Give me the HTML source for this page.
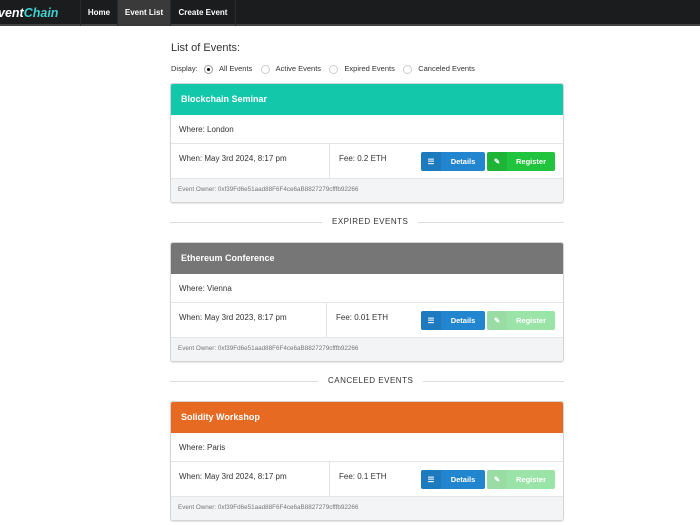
<!DOCTYPE html><html><head><style>
*{box-sizing:border-box;margin:0;padding:0}
body{width:700px;height:525px;overflow:hidden;background:#fff;font-family:"Liberation Sans",sans-serif;color:#333;position:relative}
.nav{position:absolute;left:0;top:0;width:700px;height:26px;background:#1b1c1d;border-bottom:2px solid #444}
.nav .b{position:absolute;left:-2px;top:6px;font-size:12.5px;font-weight:bold;font-style:italic;color:#fff}
.nav .b span{color:#3ed0d0}
.t{position:absolute;top:0;height:26px;line-height:26px;font-size:8px;font-weight:bold;color:#fff;text-align:center;border-left:1px solid #2a2a2a}
.a{position:absolute;font-size:8px;color:#333}
.card{position:absolute;left:170px;width:394px;height:120px;border:1px solid #d4d4d5;border-radius:3px;box-shadow:0 1px 1px #e5e5e5;overflow:hidden}
.h{height:31px;line-height:31px;padding-left:10px;color:#fff;font-size:9px;font-weight:bold}
.r1{height:29px;line-height:29px;padding-left:8px;font-size:8px;border-bottom:1px solid #e5e5e5}
.r2{height:35px;position:relative;border-bottom:1px solid #e5e5e5;font-size:8px}
.r3{height:24px;line-height:22px;background:#f3f4f5;padding-left:7px;font-size:6.3px;color:#777}
.btn{position:absolute;top:8px;height:19px;border-radius:2px;color:#fff;font-size:7.5px;font-weight:bold;line-height:19px}
.btn i{position:absolute;left:0;top:0;width:20px;height:19px;background:rgba(0,0,0,.08);font-style:normal;text-align:center}
.btn b{position:absolute;left:20px;right:0;text-align:center}
.div{position:absolute;left:170px;width:394px;height:1px;background:#ddd}
.dl{position:absolute;background:#fff;padding:0 10px;font-size:8px;letter-spacing:.5px;color:#333;top:-5px}
.rad{display:inline-block;width:9px;height:9px;border:1px solid #ccc;border-radius:50%;vertical-align:middle;margin-right:6px;position:relative}
</style></head><body>
<div class="nav"><div class="b">vent<span>Chain</span></div>
<div class="t" style="left:80px;width:37px">Home</div>
<div class="t" style="left:117px;width:53px;background:#3a3a3b">Event List</div>
<div class="t" style="left:170px;width:66px;border-right:1px solid #2a2a2a">Create Event</div>
</div>
<div class="a" style="left:171px;top:42px;font-size:11px">List of Events:</div>
<div class="a" style="left:171px;top:64px;font-size:7.5px;line-height:10px">Display: &nbsp;&nbsp;<span class="rad" style="border-color:#999"><span style="position:absolute;left:2px;top:2px;width:3px;height:3px;border-radius:50%;background:#000"></span></span>All Events &nbsp;&nbsp;&nbsp;<span class="rad"></span>Active Events &nbsp;&nbsp;&nbsp;<span class="rad"></span>Expired Events &nbsp;&nbsp;&nbsp;<span class="rad"></span>Canceled Events</div>

<div class="card" style="top:83px"><div class="h" style="background:#13c7ab">Blockchain Seminar</div>
<div class="r1">Where: London</div>
<div class="r2"><span style="position:absolute;left:8px;top:10px">When: May 3rd 2024, 8:17 pm</span><span style="position:absolute;left:158px;top:0;width:1px;height:35px;background:#e5e5e5"></span><span style="position:absolute;left:168px;top:10px">Fee: 0.2 ETH</span>
<div class="btn" style="left:250px;width:64px;background:#2185d0"><i>☰</i><b>Details</b></div><div class="btn" style="left:316px;width:68px;background:#21c43d"><i>✎</i><b>Register</b></div></div>
<div class="r3">Event Owner: 0xf39Fd6e51aad88F6F4ce6aB8827279cfffb92266</div></div>

<div class="div" style="top:222px"><span class="dl" style="left:152px">EXPIRED EVENTS</span></div>

<div class="card" style="top:242px"><div class="h" style="background:#767676">Ethereum Conference</div>
<div class="r1">Where: Vienna</div>
<div class="r2"><span style="position:absolute;left:8px;top:10px">When: May 3rd 2023, 8:17 pm</span><span style="position:absolute;left:155px;top:0;width:1px;height:35px;background:#e5e5e5"></span><span style="position:absolute;left:165px;top:10px">Fee: 0.01 ETH</span>
<div class="btn" style="left:250px;width:64px;background:#2185d0"><i>☰</i><b>Details</b></div><div class="btn" style="left:316px;width:68px;background:#21c43d;opacity:.45"><i>✎</i><b>Register</b></div></div>
<div class="r3">Event Owner: 0xf39Fd6e51aad88F6F4ce6aB8827279cfffb92266</div></div>

<div class="div" style="top:381px"><span class="dl" style="left:148px">CANCELED EVENTS</span></div>

<div class="card" style="top:401px"><div class="h" style="background:#e66a22">Solidity Workshop</div>
<div class="r1">Where: Paris</div>
<div class="r2"><span style="position:absolute;left:8px;top:10px">When: May 3rd 2024, 8:17 pm</span><span style="position:absolute;left:158px;top:0;width:1px;height:35px;background:#e5e5e5"></span><span style="position:absolute;left:168px;top:10px">Fee: 0.1 ETH</span>
<div class="btn" style="left:250px;width:64px;background:#2185d0"><i>☰</i><b>Details</b></div><div class="btn" style="left:316px;width:68px;background:#21c43d;opacity:.45"><i>✎</i><b>Register</b></div></div>
<div class="r3">Event Owner: 0xf39Fd6e51aad88F6F4ce6aB8827279cfffb92266</div></div>
</body></html>
